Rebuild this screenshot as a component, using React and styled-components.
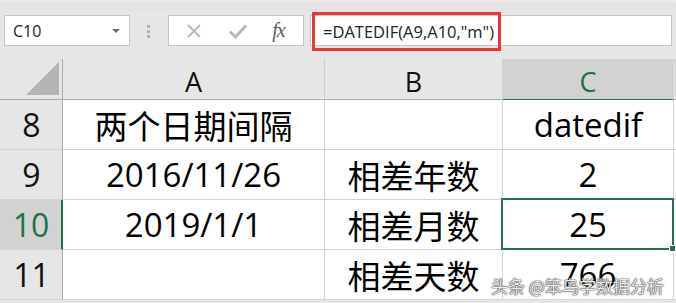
import React from 'react'
import styled, { createGlobalStyle, css } from 'styled-components'

const GREEN = '#217346'

const GlobalStyle = createGlobalStyle`
  html, body {
    margin: 0;
    padding: 0;
    background: #fff;
    width: 676px;
    height: 303px;
    overflow: hidden;
  }
`

const Page = styled.div`
  position: relative;
  width: 676px;
  height: 303px;
  overflow: hidden;
  background: #e6e6e6;
`

const FormulaBar = styled.div`
  height: 59px;
  box-sizing: border-box;
  padding: 15px 4px 0 4px;
  display: flex;
  align-items: flex-start;
  background: linear-gradient(#ecebe8 0, #e2e2e2 5px, #e6e6e6 14px);
  font-family: 'Open Sans', 'Noto Sans CJK SC', sans-serif;
`

const NameBox = styled.div`
  width: 126px;
  height: 31px;
  box-sizing: border-box;
  background: #fff;
  border: 1px solid #c6c6c6;
  display: flex;
  align-items: center;
  justify-content: space-between;
  padding: 0 9px 0 8px;
  font-size: 16px;
  color: #222;
`

const Caret = styled.span`
  width: 0;
  height: 0;
  border-left: 4px solid transparent;
  border-right: 4px solid transparent;
  border-top: 4px solid #707070;
`

const Grip = styled.div`
  width: 3px;
  margin: 10px 18px 0 17px;
  display: flex;
  flex-direction: column;
  gap: 2px;
  span {
    width: 3px;
    height: 3px;
    background: #b4b4b4;
  }
`

const ButtonBox = styled.div`
  width: 136px;
  height: 31px;
  box-sizing: border-box;
  background: #fff;
  border: 1px solid #c6c6c6;
  display: flex;
  align-items: center;
  justify-content: space-around;
  padding: 0 6px 0 4px;
`

const Fx = styled.span`
  font-family: 'Liberation Serif', serif;
  font-style: italic;
  font-size: 20px;
  color: #5c5c5c;
  letter-spacing: -1px;
`

const FormulaInput = styled.div`
  flex: 1;
  margin-left: 6px;
  height: 31px;
  box-sizing: border-box;
  background: #fff;
  border: 1px solid #c6c6c6;
  position: relative;
`

const Highlight = styled.div`
  position: absolute;
  left: 1px;
  top: -4px;
  width: 189px;
  height: 39px;
  box-sizing: border-box;
  border: 3px solid #ee3535;
  display: flex;
  align-items: center;
  padding-left: 8px;
  font-size: 16.5px;
  color: #222;
`

const Sheet = styled.div`
  display: grid;
  grid-template-columns: 63px 262px 178px 171px 1fr;
  grid-template-rows: 41px repeat(4, 50px);
  font-family: 'Open Sans', 'Noto Sans CJK SC', sans-serif;
`

const Corner = styled.div`
  background: #e6e6e6;
  border-right: 1px solid #ababab;
  border-bottom: 1px solid #ababab;
  display: flex;
  align-items: flex-end;
  justify-content: flex-end;
  padding: 0 3px 4px 0;
  &::before {
    content: '';
    width: 33px;
    height: 33px;
    background: #b4b4b4;
    clip-path: polygon(100% 0, 100% 100%, 0 100%);
  }
`

const ColHead = styled.div`
  background: ${p => (p.$active ? '#d2d2d2' : '#e6e6e6')};
  color: ${p => (p.$active ? GREEN : '#111')};
  border-right: 1px solid #cfcfcf;
  border-bottom: ${p => (p.$active ? `2px solid ${GREEN}` : '1px solid #ababab')};
  display: flex;
  align-items: center;
  justify-content: center;
  padding-top: 4px;
  font-size: 27px;
  ${p => p.$active && css`margin-bottom: -1px;`}
`

const RowHead = styled.div`
  background: ${p => (p.$active ? '#d2d2d2' : '#e6e6e6')};
  color: ${p => (p.$active ? GREEN : '#111')};
  border-right: ${p => (p.$active ? `2px solid ${GREEN}` : '1px solid #ababab')};
  border-bottom: 1px solid #d4d4d4;
  display: flex;
  align-items: center;
  justify-content: center;
  font-size: 32px;
  padding-left: 1px;
`

const Cell = styled.div`
  position: relative;
  background: #fff;
  border-right: 1px solid #d4d4d4;
  border-bottom: 1px solid #d4d4d4;
  display: flex;
  align-items: center;
  justify-content: center;
  font-size: 33px;
  color: #000;
  white-space: nowrap;
  ${p =>
    p.$selected &&
    css`
      &::after {
        content: '';
        position: absolute;
        left: -2px;
        top: -2px;
        right: -1px;
        bottom: -1px;
        border: 2px solid ${GREEN};
      }
      &::before {
        content: '';
        position: absolute;
        right: -3px;
        bottom: -3px;
        width: 5px;
        height: 5px;
        background: ${GREEN};
        border: 1px solid #fff;
        z-index: 2;
      }
    `}
`

const Spare = styled.div`
  background: #fff;
  border-bottom: 1px solid #d4d4d4;
`

const Watermark = styled.div`
  position: absolute;
  left: 491px;
  top: 273px;
  font-family: 'Noto Sans CJK SC', sans-serif;
  font-size: 17px;
  color: rgba(255, 255, 255, 0.92);
  text-shadow: 0 0 1px #333, 0 0 1px #333, 0 0 2px rgba(0, 0, 0, 0.5);
  white-space: nowrap;
`

const rows = [
  { n: 8, a: '两个日期间隔', b: '', c: 'datedif' },
  { n: 9, a: '2016/11/26', b: '相差年数', c: '2' },
  { n: 10, a: '2019/1/1', b: '相差月数', c: '25', active: true },
  { n: 11, a: '', b: '相差天数', c: '766' }
]

export default function App() {
  return (
    <Page>
      <GlobalStyle />
      <FormulaBar>
        <NameBox>
          C10
          <Caret />
        </NameBox>
        <Grip>
          <span />
          <span />
          <span />
        </Grip>
        <ButtonBox>
          <svg width="18" height="18" viewBox="0 0 18 18">
            <path d="M3 3 L15 15 M15 3 L3 15" stroke="#b8b8b8" strokeWidth="1.8" fill="none" />
          </svg>
          <svg width="20" height="18" viewBox="0 0 20 18">
            <path d="M2 9.5 L7.5 15 L18 3.5" stroke="#b8b8b8" strokeWidth="3" fill="none" />
          </svg>
          <Fx>fx</Fx>
        </ButtonBox>
        <FormulaInput>
          <Highlight>=DATEDIF(A9,A10,"m")</Highlight>
        </FormulaInput>
      </FormulaBar>
      <Sheet>
        <Corner />
        <ColHead>A</ColHead>
        <ColHead>B</ColHead>
        <ColHead $active>C</ColHead>
        <ColHead />
        {rows.map(r => (
          <React.Fragment key={r.n}>
            <RowHead $active={r.active}>{r.n}</RowHead>
            <Cell>{r.a}</Cell>
            <Cell>{r.b}</Cell>
            <Cell $selected={r.active}>{r.c}</Cell>
            <Spare />
          </React.Fragment>
        ))}
      </Sheet>
      <Watermark>头条 @笨鸟学数据分析</Watermark>
    </Page>
  )
}
